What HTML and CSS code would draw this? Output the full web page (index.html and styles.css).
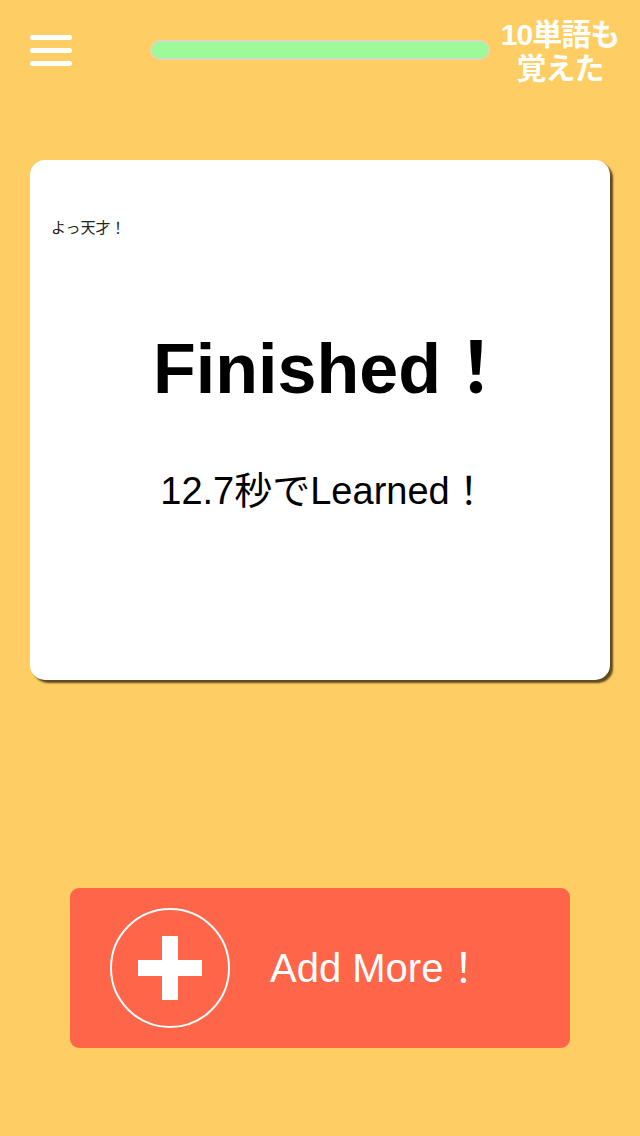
FILE: index.html
```html
<!DOCTYPE html>
<html lang="ja">
<head>
<meta charset="utf-8">
<title>Finished</title>
<link rel="stylesheet" href="styles.css">
</head>
<body>
<div class="screen">
  <header class="topbar">
    <div class="menu" aria-label="menu">
      <span class="menu-line"></span>
      <span class="menu-line"></span>
      <span class="menu-line"></span>
    </div>
    <div class="progress"><div class="progress-fill"></div></div>
    <div class="count">10単語も覚えた</div>
  </header>

  <main class="card">
    <p class="praise">よっ天才！</p>
    <h1 class="title">Finished！</h1>
    <p class="time">12.7秒でLearned！</p>
  </main>

  <button class="add-btn" type="button">
    <svg class="add-icon" width="122" height="122" viewBox="0 0 122 122">
      <circle cx="61" cy="61" r="59" fill="none" stroke="#ffffff" stroke-width="2"/>
      <rect x="53" y="29" width="16" height="64" fill="#ffffff"/>
      <rect x="29" y="53" width="64" height="16" fill="#ffffff"/>
    </svg>
    <span class="add-label">Add More！</span>
  </button>
</div>
</body>
</html>
```

FILE: styles.css
```css
html, body {
  margin: 0;
  padding: 0;
}

body {
  background: #fece65;
  font-family: "Liberation Sans", "Noto Sans CJK JP", sans-serif;
}

.screen {
  width: 640px;
  height: 1136px;
  display: flex;
  flex-direction: column;
  align-items: flex-start;
}

.topbar {
  box-sizing: border-box;
  width: 640px;
  height: 100px;
  padding: 0 8px 0 30px;
  display: flex;
  align-items: center;
}

.menu {
  width: 42px;
  height: 31px;
  display: flex;
  flex-direction: column;
  justify-content: space-between;
  margin-right: 78px;
}

.menu-line {
  display: block;
  height: 5px;
  border-radius: 3px;
  background: #ffffff;
}

.progress {
  box-sizing: border-box;
  width: 340px;
  height: 20px;
  border: 2px solid #dcd6c4;
  border-radius: 10px;
  background: #9cfa98;
  overflow: hidden;
}

.progress-fill {
  width: 100%;
  height: 100%;
  background: #9cfa98;
}

.count {
  width: 136px;
  margin: 4px 0 0 2px;
  color: #ffffff;
  font-weight: bold;
  font-size: 30px;
  line-height: 34px;
  text-align: center;
  letter-spacing: -1px;
}

.card {
  box-sizing: border-box;
  width: 580px;
  height: 520px;
  margin: 60px 0 0 30px;
  padding: 57px 21px 0 21px;
  background: #ffffff;
  border-radius: 15px;
  box-shadow: 3px 3px 2px rgba(40, 30, 10, 0.75);
}

.praise {
  margin: 0;
  font-size: 15px;
  line-height: 22px;
  color: #222222;
}

.title {
  margin: 90px 0 0 0;
  padding-left: 24px;
  font-size: 70px;
  line-height: 80px;
  font-weight: bold;
  color: #000000;
  text-align: center;
}

.time {
  margin: 59px 0 0 0;
  padding-left: 8px;
  font-size: 38px;
  line-height: 46px;
  color: #000000;
  text-align: center;
}

.add-btn {
  box-sizing: border-box;
  width: 500px;
  height: 160px;
  margin: 208px 0 0 70px;
  padding: 0 0 0 39px;
  border: none;
  border-radius: 9px;
  background: #ff6549;
  display: flex;
  align-items: center;
  font-family: "Liberation Sans", "Noto Sans CJK JP", sans-serif;
  cursor: pointer;
}

.add-icon {
  display: block;
  flex: none;
}

.add-label {
  margin-left: 39px;
  color: #ffffff;
  font-size: 40px;
  line-height: 48px;
}
```
